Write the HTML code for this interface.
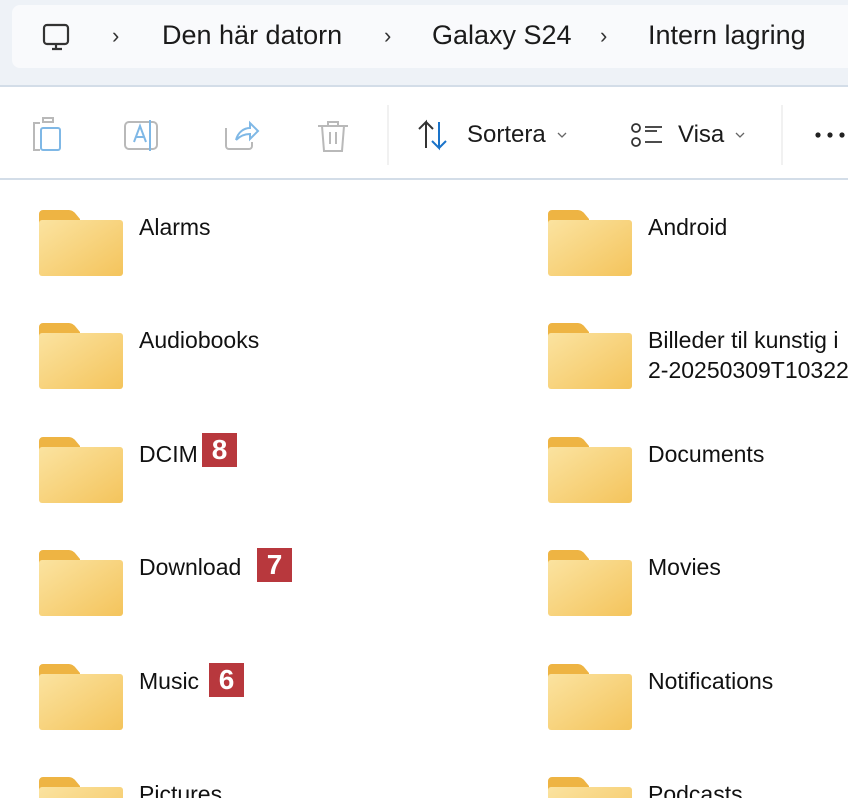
<!DOCTYPE html>
<html style="height:798px;overflow:hidden"><head><meta charset="utf-8"><style>
html,body{margin:0;width:848px;height:798px;overflow:hidden}
body{background:#fff;font-family:"Liberation Sans",sans-serif;color:#1b1b1b;position:relative}
.top{position:absolute;left:0;top:0;width:848px;height:85px;background:#eef2f7;border-bottom:2px solid #d3dde8}
.crumb{position:absolute;left:12px;top:5px;width:850px;height:63px;background:#f9fafc;border-radius:8px}
.t{position:absolute;white-space:nowrap}
.bc{font-size:27px;top:20px}
.sep{font-size:22px;top:23px;color:#333}
.tb{position:absolute;left:0;top:178px;width:848px;height:2px;background:#d3dde8}
.f{position:absolute;width:86px;height:67px}
.n{font-size:23px;color:#111}
.b{position:absolute;background:#b8383d;color:#fff;font-weight:bold;font-size:28px;text-align:center;width:35px;height:34px;line-height:34px}
</style></head><body>
<div class="top"><div class="crumb"></div></div>
<svg style="position:absolute;left:40px;top:22px" width="34" height="34" viewBox="0 0 34 34" fill="none" stroke="#333" stroke-width="2.2"><rect x="4" y="3" width="24" height="19" rx="3"/><path d="M12 27h10M16 22v5"/></svg>
<div class="t sep" style="left:112px">›</div>
<div class="t bc" style="left:162px">Den här datorn</div>
<div class="t sep" style="left:384px">›</div>
<div class="t bc" style="left:432px">Galaxy S24</div>
<div class="t sep" style="left:600px">›</div>
<div class="t bc" style="left:648px">Intern lagring</div>

<svg style="position:absolute;left:0;top:100px" width="848" height="70" fill="none" stroke-width="2">
<g stroke="#b9b9b9"><path d="M40 23h-6v27h6M43 22h10v-4h-10z"/><rect x="41" y="28" width="19" height="22" rx="2" stroke="#7fb8e6"/>
<rect x="125" y="22" width="32" height="27" rx="4"/><path d="M134 42l6-16 6 16M136 37h8" stroke="#7fb8e6"/><path d="M150 20v31" stroke="#7fb8e6"/>
<path d="M226 28v18a3 3 0 0 0 3 3h20a3 3 0 0 0 3-3v-4"/><path d="M236 40c2-8 8-12 14-12v-5l8 8-8 8v-5c-6 0-10 2-14 6" stroke="#7fb8e6"/>
<path d="M318 26h30M328 26v-4h10v4M322 26l2 25h18l2-25M330 32v12M336 32v12"/></g>
<path d="M388 5v60M782 5v60" stroke="#e3e3e3" stroke-width="1"/>
<path d="M426 48V22l-7 7M426 22l7 7" stroke="#333"/><path d="M439 22v26l-7-7M439 48l7-7" stroke="#1a73c9"/>
<g stroke="#333" stroke-width="1.8"><circle cx="636" cy="28" r="4"/><circle cx="636" cy="42" r="4"/><path d="M645 27h17M645 31h12M645 42h17"/></g>
<path d="M558 33l4 4 4-4M736 33l4 4 4-4" stroke="#666" stroke-width="1.3"/>
<g fill="#222" stroke="none"><circle cx="818" cy="35" r="2.6"/><circle cx="830" cy="35" r="2.6"/><circle cx="842" cy="35" r="2.6"/></g>
</svg>
<div class="t" style="left:467px;top:121px;font-size:24px">Sortera</div>
<div class="t" style="left:678px;top:121px;font-size:24px">Visa</div>
<div class="tb"></div>

<svg width="0" height="0" style="position:absolute"><defs>
<linearGradient id="g" x1="0" y1="0" x2="1" y2="1"><stop offset="0" stop-color="#fbe3a0"/><stop offset="1" stop-color="#f4c45c"/></linearGradient>
<symbol id="fo" viewBox="0 0 86 67"><path d="M5 0h25c3 0 5 1 7 3l5 6v8H1V4a4 4 0 0 1 4-4z" fill="#eeb443"/><rect x="1" y="10" width="84" height="56" rx="3" fill="url(#g)"/></symbol></defs></svg>

<svg class="f" style="left:38px;top:210px"><use href="#fo"/></svg>
<svg class="f" style="left:547px;top:210px"><use href="#fo"/></svg>
<svg class="f" style="left:38px;top:323px"><use href="#fo"/></svg>
<svg class="f" style="left:547px;top:323px"><use href="#fo"/></svg>
<svg class="f" style="left:38px;top:437px"><use href="#fo"/></svg>
<svg class="f" style="left:547px;top:437px"><use href="#fo"/></svg>
<svg class="f" style="left:38px;top:550px"><use href="#fo"/></svg>
<svg class="f" style="left:547px;top:550px"><use href="#fo"/></svg>
<svg class="f" style="left:38px;top:664px"><use href="#fo"/></svg>
<svg class="f" style="left:547px;top:664px"><use href="#fo"/></svg>
<svg class="f" style="left:38px;top:777px"><use href="#fo"/></svg>
<svg class="f" style="left:547px;top:777px"><use href="#fo"/></svg>

<div class="t n" style="left:139px;top:214px">Alarms</div>
<div class="t n" style="left:648px;top:214px">Android</div>
<div class="t n" style="left:139px;top:327px">Audiobooks</div>
<div class="t n" style="left:648px;line-height:30px;top:325px">Billeder til kunstig i<br>2-20250309T10322</div>
<div class="t n" style="left:139px;top:441px">DCIM</div>
<div class="b" style="left:202px;top:433px">8</div>
<div class="t n" style="left:648px;top:441px">Documents</div>
<div class="t n" style="left:139px;top:554px">Download</div>
<div class="b" style="left:257px;top:548px">7</div>
<div class="t n" style="left:648px;top:554px">Movies</div>
<div class="t n" style="left:139px;top:668px">Music</div>
<div class="b" style="left:209px;top:663px">6</div>
<div class="t n" style="left:648px;top:668px">Notifications</div>
<div class="t n" style="left:139px;top:781px">Pictures</div>
<div class="t n" style="left:648px;top:781px">Podcasts</div>
</body></html>
